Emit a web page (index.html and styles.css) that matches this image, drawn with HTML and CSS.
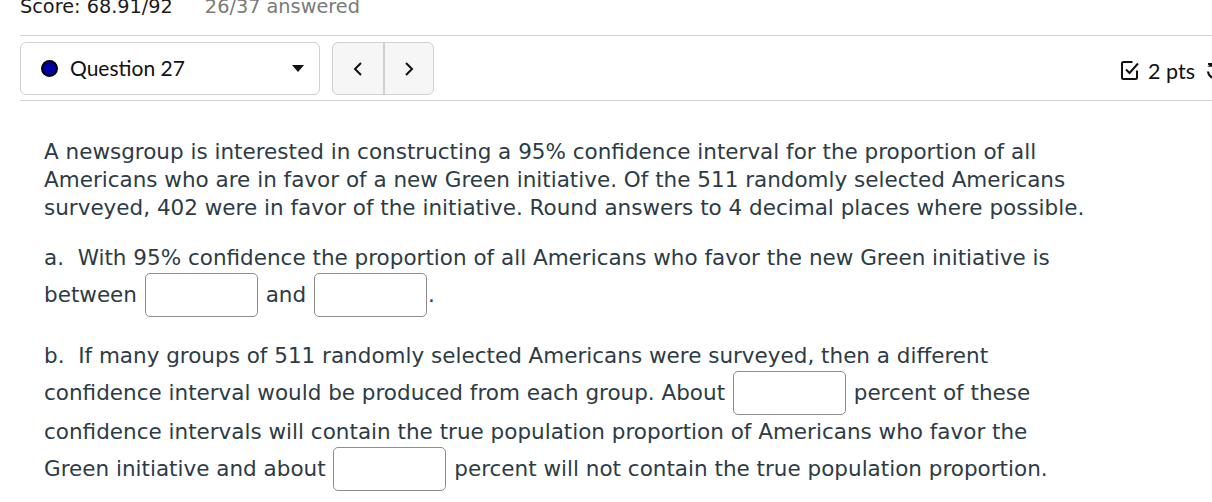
FILE: index.html
```html
<!DOCTYPE html>
<html lang="en">
<head>
<meta charset="utf-8">
<title>Question 27</title>
<link rel="stylesheet" href="styles.css">
</head>
<body>
<div class="page">
  <div class="score-bar">
    <span class="score">Score: 68.91/92</span>
    <span class="answered">26/37 answered</span>
  </div>

  <div class="header">
    <div class="header-row">
      <div class="select">
        <span class="dot"></span>
        <span class="select-label">Question 27</span>
        <span class="caret"></span>
      </div>
      <div class="nav">
        <button class="nav-btn" aria-label="Previous">
          <svg width="10" height="16" viewBox="0 0 10 16"><path d="M8 2 L2 8 L8 14" fill="none" stroke="#111" stroke-width="2"/></svg>
        </button>
        <button class="nav-btn" aria-label="Next">
          <svg width="10" height="16" viewBox="0 0 10 16"><path d="M2 2 L8 8 L2 14" fill="none" stroke="#111" stroke-width="2"/></svg>
        </button>
      </div>
      <div class="points">
        <svg class="check" width="20" height="21" viewBox="0 0 20 21">
          <path d="M12.5 2 H3.5 A1.5 1.5 0 0 0 2 3.5 V17.5 A1.5 1.5 0 0 0 3.5 19 H15.5 A1.5 1.5 0 0 0 17 17.5 V10.5" fill="none" stroke="#111" stroke-width="2"/>
          <path d="M6 9.5 L9.5 13 L18 3.5" fill="none" stroke="#111" stroke-width="2"/>
        </svg>
        <span class="pts">2 pts</span>
        <svg class="reset" width="20" height="20" viewBox="0 0 20 20">
          <path d="M3 3 H8 V4.6 H5.6 A7 7 0 1 1 3 10.5" fill="none" stroke="#111" stroke-width="2.2"/>
        </svg>
      </div>
    </div>
  </div>

  <div class="question">
    <p class="intro">A newsgroup is interested in constructing a 95% confidence interval for the proportion of all<br>Americans who are in favor of a new Green initiative. Of the 511 randomly selected Americans<br>surveyed, 402 were in favor of the initiative. Round answers to 4 decimal places where possible.</p>

    <p class="part part-a">a.&nbsp; With 95% confidence the proportion of all Americans who favor the new Green initiative is<br>between <input class="answer" type="text" aria-label="lower bound"> and <input class="answer" type="text" aria-label="upper bound">.</p>

    <p class="part part-b">b.&nbsp; If many groups of 511 randomly selected Americans were surveyed, then a different<br>confidence interval would be produced from each group. About <input class="answer" type="text" aria-label="percent contain"> percent of these<br>confidence intervals will contain the true population proportion of Americans who favor the<br>Green initiative and about <input class="answer" type="text" aria-label="percent not contain"> percent will not contain the true population proportion.</p>
  </div>
</div>
</body>
</html>
```
FILE: styles.css
```css
html, body {
  margin: 0;
  padding: 0;
  background: #fff;
  overflow: hidden;
}

.page {
  width: 1260px;
}

.score-bar {
  display: flex;
  gap: 32px;
  margin: -4px 0 0 20px;
  height: 22px;
  line-height: 22px;
  font-family: "DejaVu Sans", Verdana, sans-serif;
  font-size: 19.3px;
}

.score { color: #1b1b1b; }
.answered { color: #7a7a7a; }

.header {
  margin: 17px 0 0 20px;
  border-top: 1px solid #d4d4d4;
  border-bottom: 1px solid #d4d4d4;
  padding: 6px 0 5px;
}

.header-row {
  display: flex;
  align-items: center;
  width: 1205px;
  height: 53px;
}

.select {
  box-sizing: border-box;
  width: 300px;
  height: 53px;
  border: 1px solid #d0d0d0;
  border-radius: 6px;
  display: flex;
  align-items: center;
  padding: 0 15px 0 20px;
  font-family: Lato, "Open Sans", sans-serif;
  font-size: 21px;
  color: #111;
}

.dot {
  box-sizing: border-box;
  width: 17px;
  height: 17px;
  border-radius: 50%;
  background: #0000a6;
  border: 2px solid #000;
  margin-right: 12px;
  flex: none;
}

.select-label {
  flex: 1;
  margin-top: -2px;
}

.caret {
  width: 0;
  height: 0;
  border-left: 6px solid transparent;
  border-right: 6px solid transparent;
  border-top: 7px solid #111;
}

.nav {
  display: flex;
  margin-left: 12px;
  height: 53px;
  box-sizing: border-box;
  border: 1px solid #d0d0d0;
  border-radius: 6px;
  background: #f6f6f6;
  overflow: hidden;
}

.nav-btn {
  width: 50px;
  height: 100%;
  border: 0;
  background: transparent;
  padding: 0;
  display: flex;
  align-items: center;
  justify-content: center;
  cursor: pointer;
}

.nav-btn + .nav-btn {
  border-left: 2px solid #d0d0d0;
}

.points {
  margin-left: auto;
  display: flex;
  align-items: center;
  margin-top: 4px;
  font-family: Lato, "Open Sans", sans-serif;
  font-size: 21.5px;
  color: #111;
}

.check { margin-right: 8px; }
.pts { margin-right: 10px; }

.question {
  margin: 37px 0 0 44px;
  font-family: "DejaVu Sans", Verdana, sans-serif;
  font-size: 21.5px;
  color: #2d3b45;
}

.question p {
  margin: 0;
  white-space: nowrap;
}

.intro {
  line-height: 28px;
}

.part {
  line-height: 30px;
}

.part-a { margin-top: 21px !important; }
.part-b { margin-top: 22px !important; }

.answer {
  box-sizing: border-box;
  width: 113px;
  height: 44px;
  margin: 0 1px 2px;
  border: 1px solid #8d8d8d;
  border-radius: 5px;
  background: #fff;
  vertical-align: middle;
  font: inherit;
  padding: 0 8px;
}
```
